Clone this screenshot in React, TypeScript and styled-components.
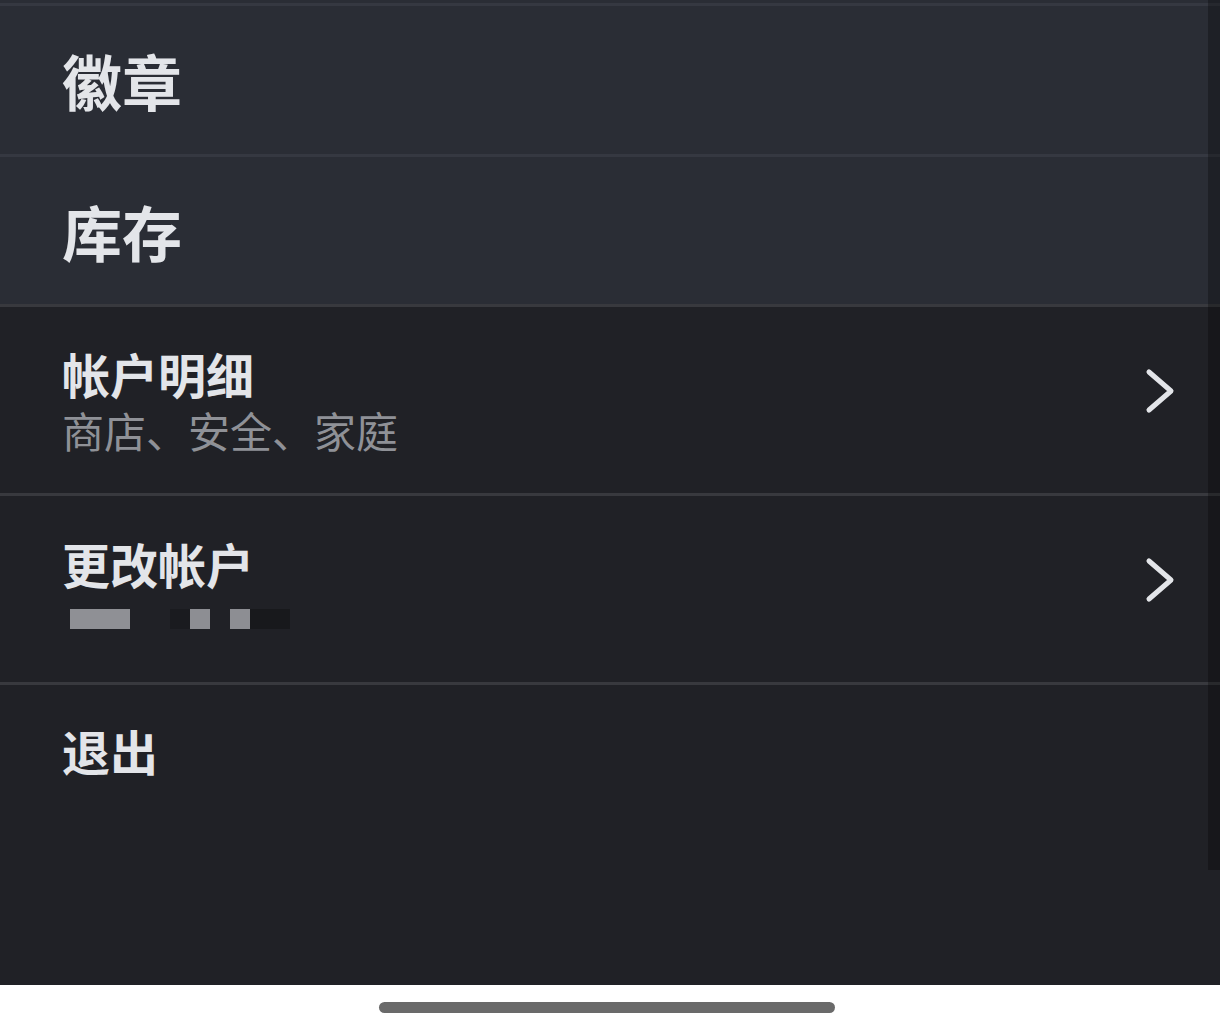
import styled, { createGlobalStyle } from "styled-components";

const GlobalStyle = createGlobalStyle`
    html, body {
        margin: 0;
        padding: 0;
        background: #ffffff;
    }
    body {
        font-family: "Noto Sans CJK SC", "Noto Sans", sans-serif;
    }
`

const Screen = styled.div`
    position: relative;
    width: 1220px;
    height: 1030px;
    display: flex;
    flex-direction: column;
    overflow: hidden;
`

const Menu = styled.div`
    height: 985px;
    background-color: #202126;
    display: flex;
    flex-direction: column;
`

const TopGap = styled.div`
    height: 3px;
    background-color: #2a2d35;
`

const Row = styled.div<{ $raised?: boolean; $height: number; $top?: boolean }>`
    display: flex;
    align-items: ${p => p.$top ? "flex-start" : "center"};
    justify-content: space-between;
    height: ${p => p.$height}px;
    padding: 0 43px 0 62px;
    box-sizing: border-box;
    background-color: ${p => p.$raised ? "#2a2d35" : "#202126"};
    border-top: 3px solid ${p => p.$raised ? "#353841" : "#38393e"};
    flex-shrink: 0;
`

const Label = styled.div<{ $size: number }>`
    font-size: ${p => p.$size}px;
    font-weight: 700;
    color: #e3e5e9;
    line-height: 1;
    letter-spacing: 0;
`

const TextBlock = styled.div`
    display: flex;
    flex-direction: column;
`

const Subtitle = styled.div`
    font-size: 42px;
    font-weight: 400;
    color: #8f9197;
    line-height: 1;
    margin-top: 12px;
`

const Redacted = styled.div`
    display: flex;
    align-items: center;
    height: 40px;
    margin-top: 12px;
`

const Pixel = styled.div<{ $w: number; $tone: string }>`
    width: ${p => p.$w}px;
    height: 20px;
    background-color: ${p => p.$tone};
`

const LogoutRow = styled(Row)`
    padding-top: 41px;
`

const ChevronBox = styled.div`
    display: flex;
    margin-bottom: 18px;
`

const Scrollbar = styled.div`
    position: absolute;
    top: 0;
    right: 0;
    width: 12px;
    height: 870px;
    background-color: rgba(0, 0, 0, 0.28);
`

const HomeArea = styled.div`
    flex: 1;
    display: flex;
    justify-content: center;
    align-items: center;
    background: #ffffff;
`

const HomeIndicator = styled.div`
    width: 456px;
    height: 11px;
    border-radius: 6px;
    background-color: #6a6a6a;
    margin-left: -6px;
`

const Chevron = () => (
    <ChevronBox>
        <svg width="34" height="50" viewBox="0 0 34 50">
            <polyline points="6,6 28,25 6,44" fill="none" stroke="#e3e5e9" strokeWidth="5" strokeLinecap="round" strokeLinejoin="round" />
        </svg>
    </ChevronBox>
)

const pixels = [
    { w: 8, tone: "#202126" },
    { w: 60, tone: "#8f9095" },
    { w: 40, tone: "#202126" },
    { w: 20, tone: "#1a1b1f" },
    { w: 20, tone: "#8d8e93" },
    { w: 20, tone: "#202126" },
    { w: 20, tone: "#8d8e93" },
    { w: 40, tone: "#18191c" },
]

const App = () => {
    return (
        <Screen>
            <GlobalStyle />
            <Menu>
                <TopGap />
                <Row $raised $height={151}>
                    <Label $size={60}>徽章</Label>
                </Row>
                <Row $raised $height={150}>
                    <Label $size={60}>库存</Label>
                </Row>
                <Row $height={189}>
                    <TextBlock>
                        <Label $size={48}>帐户明细</Label>
                        <Subtitle>商店、安全、家庭</Subtitle>
                    </TextBlock>
                    <Chevron />
                </Row>
                <Row $height={189}>
                    <TextBlock>
                        <Label $size={48}>更改帐户</Label>
                        <Redacted>
                            {pixels.map((px, i) => <Pixel key={i} $w={px.w} $tone={px.tone} />)}
                        </Redacted>
                    </TextBlock>
                    <Chevron />
                </Row>
                <LogoutRow $height={303} $top>
                    <Label $size={48}>退出</Label>
                </LogoutRow>
            </Menu>
            <HomeArea>
                <HomeIndicator />
            </HomeArea>
            <Scrollbar />
        </Screen>
    )
}

export default App;
